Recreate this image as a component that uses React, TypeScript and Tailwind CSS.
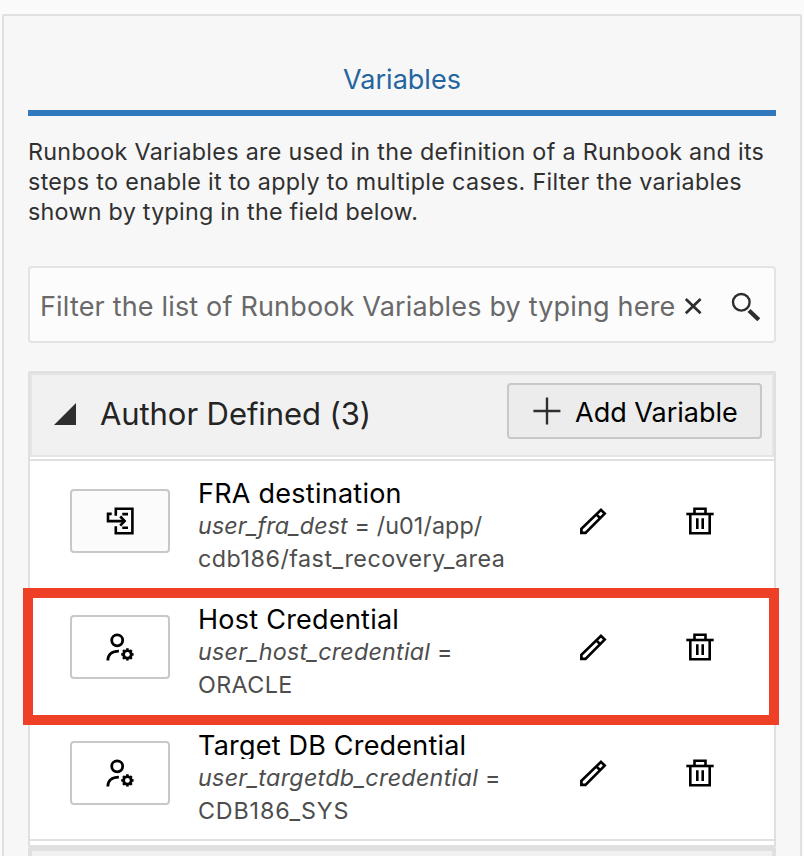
import React from "react";

type Kind = "input" | "credential";

interface Variable {
  kind: Kind;
  title: string;
  titleClass: string;
  name: string;
  nameClass: string;
  inline?: string;
  value: string;
  valueClass: string;
}

const variables: Variable[] = [
  {
    kind: "input",
    title: "FRA destination",
    titleClass: "tracking-[0.25px]",
    name: "user_fra_dest",
    nameClass: "tracking-[0.1px]",
    inline: "/u01/app/",
    value: "cdb186/fast_recovery_area",
    valueClass: "tracking-[0.5px]",
  },
  {
    kind: "credential",
    title: "Host Credential",
    titleClass: "tracking-[0.25px]",
    name: "user_host_credential",
    nameClass: "tracking-[0.22px]",
    value: "ORACLE",
    valueClass: "tracking-[0.4px]",
  },
  {
    kind: "credential",
    title: "Target DB Credential",
    titleClass: "tracking-[0.2px] overflow-hidden",
    name: "user_targetdb_credential",
    nameClass: "tracking-[0.29px]",
    value: "CDB186_SYS",
    valueClass: "tracking-[0.85px]",
  },
];

function InputIcon() {
  return (
    <svg width="28" height="28" viewBox="0 0 28 28" fill="none" stroke="#000" strokeWidth="2.6">
      <path d="M9.8 8.7V1.7H26.4V26.3H9.8V19.3" />
      <path d="M5.7 6.9H2V14.1H18" />
      <path d="M14.2 9.4L18.6 14.1L14.2 18.6" />
      <path d="M16.3 7.1H22M16.3 20.7H22" />
    </svg>
  );
}

const teeth = [0, 45, 90, 135, 180, 225, 270, 315];

function CredentialIcon() {
  return (
    <svg width="28" height="28" viewBox="0 0 28 28" fill="none" stroke="#000" strokeWidth="2.8">
      <circle cx="11.2" cy="7.3" r="5.5" />
      <path d="M1.8 27.5C1.8 21.5 6 18.1 12.9 18.1" />
      <circle cx="21.4" cy="21.4" r="3.8" strokeWidth="2.8" />
      {teeth.map((a) => (
        <path key={a} d="M21.4 17.6V15.2" strokeWidth="2.5" transform={`rotate(${a} 21.4 21.4)`} />
      ))}
    </svg>
  );
}

function PencilIcon() {
  return (
    <svg width="28" height="28" viewBox="0 0 28 28" fill="none" stroke="#000" strokeWidth="2.7">
      <path d="M22 2.9L25.7 6.6L6.5 25.9H2.4V21.9Z" />
      <path d="M17.3 7.4L21.2 11.3" />
    </svg>
  );
}

function TrashIcon() {
  return (
    <svg width="28" height="28" viewBox="0 0 28 28" fill="none" stroke="#000" strokeWidth="2.6">
      <path d="M0.3 7H27.7" />
      <path d="M8.5 7V1.7H19.5V7" />
      <path d="M4.3 7V26.3H23.7V7" />
      <path d="M11.3 11.2V22M16.7 11.2V22" />
    </svg>
  );
}

function Row({ v }: { v: Variable }) {
  return (
    <div className="flex h-[126px] pl-10">
      <div
        className={`mt-7 flex h-16 w-[100px] shrink-0 items-center justify-center rounded-[4px] border-2 border-[#c8c8c8] ${
          v.kind === "input" ? "bg-[#fbfbfb]" : "bg-white"
        }`}
      >
        {v.kind === "input" ? <InputIcon /> : <CredentialIcon />}
      </div>
      <div className="ml-7 w-[381px] shrink-0 whitespace-nowrap pt-[15px]">
        <div className={`h-[31px] text-[27px] leading-[36px] text-black ${v.titleClass}`}>{v.title}</div>
        <div className={`mt-[2px] text-[23.3px] leading-[33px] text-[#4d4d4d] ${v.nameClass}`}>
          <i>{v.name}</i> ={v.inline ? ` ${v.inline}` : ""}
        </div>
        <div className={`text-[23.3px] leading-[33px] text-[#4d4d4d] ${v.valueClass}`}>{v.value}</div>
      </div>
      <div className="mt-[46px]">
        <PencilIcon />
      </div>
      <div className="mt-[46px] ml-[79px]">
        <TrashIcon />
      </div>
    </div>
  );
}

export default function App() {
  return (
    <div className="h-[856px] w-[804px] overflow-hidden bg-[#fafafa] px-[2px] pt-[14px] font-['Inter',sans-serif] font-[430]">
      <div className="h-[900px] w-[800px] rounded-[2px] border-2 border-[#e0e0e0] bg-[#f7f7f7] px-6">
        <div className="flex h-[100px] justify-center border-b-[6px] border-[#3079bf] pt-[46px]">
          <span className="text-[27px] leading-[36px] text-[#24659f]">Variables</span>
        </div>

        <div className="mt-[21px] whitespace-nowrap text-[23.3px] leading-[30px] text-[#303030]">
          <div className="tracking-[0.3px]">Runbook Variables are used in the definition of a Runbook and its</div>
          <div className="tracking-[0.33px]">steps to enable it to apply to multiple cases. Filter the variables</div>
          <div className="tracking-[0.26px]">shown by typing in the field below.</div>
        </div>

        <div className="mt-[39px] flex h-[77px] items-center rounded-[4px] border-2 border-[#e4e4e4] bg-[#fcfcfc] pl-[10px]">
          <span className="mt-[5px] w-[643px] shrink-0 whitespace-nowrap text-[27px] leading-[36px] tracking-[0.17px] text-[#696969]">
            Filter the list of Runbook Variables by typing here
          </span>
          <svg width="20" height="20" viewBox="0 0 20 20" className="mt-[3px] shrink-0" stroke="#2e2e2e" strokeWidth="2.7">
            <path d="M2.8 3L17.6 17.2M17.6 3L2.8 17.2" />
          </svg>
          <svg width="30" height="30" viewBox="0 0 30 30" className="mt-[3px] ml-[28px] shrink-0" fill="none" stroke="#2e2e2e">
            <circle cx="10.3" cy="11.3" r="8.3" strokeWidth="2.4" />
            <path d="M18 19.5L27.8 28.7" strokeWidth="4.3" />
          </svg>
        </div>

        <div className="mt-7 border-2 border-[#e0e0e0] rounded-t-[2px] bg-white">
          <div className="flex h-[84px] items-center border-2 border-[#e3e5e4] bg-[#f1f1f1] pl-[22px]">
            <svg width="22" height="22" viewBox="0 0 22 22" className="mb-[2px] shrink-0">
              <path d="M22 0V22H0Z" fill="#2e2e2e" />
            </svg>
            <span className="mb-[2px] ml-[24px] whitespace-nowrap text-[31px] leading-[40px] tracking-[-0.08px] text-[#242424]">
              Author Defined (3)
            </span>
            <div className="mr-[10px] mb-[8px] ml-auto flex h-14 w-[255px] items-center rounded-[4px] border-2 border-[#c8c8c8] bg-[#ececec] pl-6">
              <svg width="28" height="28" viewBox="0 0 28 28" className="shrink-0" stroke="#2e2e2e" strokeWidth="2.4">
                <path d="M0.4 14H27.4M14 0.5V27.5" />
              </svg>
              <span className="mt-[3px] ml-[14px] whitespace-nowrap text-[27px] leading-[36px] text-black">Add Variable</span>
            </div>
          </div>
          <div className="mt-[2px] border-y-2 border-[#e0e0e0]">
            {variables.map((v) => (
              <Row key={v.name} v={v} />
            ))}
          </div>
          <div className="h-1" />
        </div>
        <div className="rounded-[2px] border-2 border-[#dfe1e0] bg-white">
          <div className="h-[84px] border-2 border-[#dfe1e0] bg-[#f1f1f1]" />
        </div>
      </div>
      <div className="absolute top-[588px] left-[23px] h-[137px] w-[756px] border-[10px] border-[#ee4026]" />
    </div>
  );
}
